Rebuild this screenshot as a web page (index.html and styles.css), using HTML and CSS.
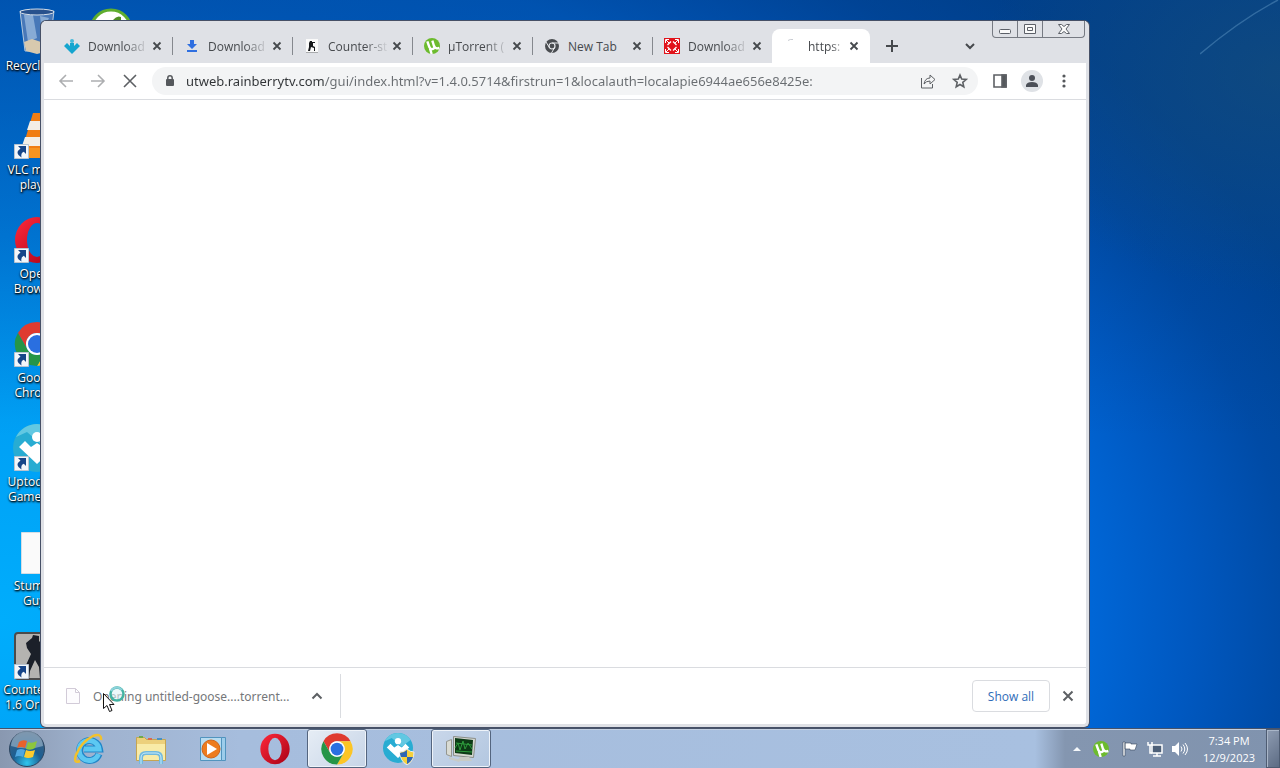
FILE: index.html
```html
<!DOCTYPE html>
<html lang="en">
<head>
    <meta charset="UTF-8">
    <title>Desktop</title>
    <link rel="stylesheet" href="styles.css">
</head>
<body>
    <!-- shared logos -->
    <svg class="defs" aria-hidden="true">
        <defs>
            <linearGradient id="opera-red" x1="0" y1="0" x2="1" y2="1">
                <stop offset="0" stop-color="#ff2a3c"/>
                <stop offset="1" stop-color="#a70014"/>
            </linearGradient>
            <radialGradient id="orb" cx="50%" cy="90%" r="90%">
                <stop offset="0" stop-color="#2fc6ee"/>
                <stop offset=".45" stop-color="#1b5f93"/>
                <stop offset="1" stop-color="#44617f"/>
            </radialGradient>
        </defs>
        <symbol id="chrome" viewBox="0 0 48 48">
            <path fill="#df3b30" d="M24 13H43.1A22 22 0 0 0 4.9 13L14.5 29.5A11 11 0 0 1 24 13z"/>
            <path fill="#fcc525" transform="rotate(120 24 24)" d="M24 13H43.1A22 22 0 0 0 4.9 13L14.5 29.5A11 11 0 0 1 24 13z"/>
            <path fill="#259547" transform="rotate(240 24 24)" d="M24 13H43.1A22 22 0 0 0 4.9 13L14.5 29.5A11 11 0 0 1 24 13z"/>
            <circle cx="24" cy="24" r="11" fill="#fff"/>
            <circle cx="24" cy="24" r="9" fill="#2a6fe0"/>
        </symbol>
        <symbol id="opera" viewBox="0 0 48 48">
            <path fill="url(#opera-red)" fill-rule="evenodd" d="M24 1a22 23 0 1 0 0 46a22 23 0 1 0 0-46zM24 7a10 17 0 1 1 0 34a10 17 0 1 1 0-34z"/>
        </symbol>
        <symbol id="utorrent" viewBox="0 0 24 24">
            <circle cx="12" cy="12" r="12" fill="#6cbb2e"/>
            <path fill="none" stroke="#fff" stroke-width="3.6" d="M5 5l3 8.500q1.500 4 5 3q3.500-1 2-4.500L12.500 4M15.500 12q1.500 5 7.500 3M9 16l2.500 8"/>
        </symbol>
        <symbol id="uptodown" viewBox="0 0 48 48">
            <circle cx="24" cy="24" r="24" fill="#28acd2"/>
            <path fill="#62c8e2" d="M24 0a24 24 0 0 1 20 11L30 22L14 8L3 13A24 24 0 0 1 24 0z"/>
            <circle cx="24" cy="13" r="5" fill="#fff"/>
            <path fill="#fff" d="M12 17l6 6 6-4 6 4 6-6 6 6-18 17L6 23z"/>
        </symbol>
        <symbol id="shortcut" viewBox="0 0 15 15">
            <path fill="#f2f6fa" stroke="#b9c4d0" d="M.5.5h14v14H.5z"/>
            <path fill="#164588" d="M4 2h8v8L9.800 7.800Q6.500 9 7.500 13.500Q0 9 6.500 4.500z"/>
        </symbol>
        <symbol id="x" viewBox="0 0 16 16">
            <path fill="none" stroke="currentColor" stroke-width="1.800" d="M4.500 4.500l7 7M11.500 4.500l-7 7"/>
        </symbol>
    </svg>

    <main class="desktop">
        <svg class="light-ray" viewBox="0 0 80 56" aria-hidden="true">
            <path d="M0 54Q40 20 78 0" fill="none" stroke="#6fa6cf" stroke-opacity=".4" stroke-width="1.500"/>
        </svg>

        <div class="shortcuts">
            <a class="shortcut" href="#">
                <svg class="shortcut-icon" viewBox="0 0 48 48">
                    <path fill="#4878b8" stroke="#b4c9de" d="M7 3h34l-5 40H12z"/>
                    <path fill="#88abd5" d="M11 7h9l4 23-9 4zM27 8l9 2-7 15z"/>
                    <ellipse cx="24" cy="4" rx="17" ry="3" fill="#28518d" stroke="#d6dfe8"/>
                    <path fill="#d8c9ae" d="M11 34l8-3 9 3 9-2-2 11-11 3-11-3z"/>
                </svg>
                <span>Recycle Bin</span>
            </a>
            <a class="shortcut" href="#">
                <svg class="shortcut-icon" viewBox="0 0 48 48">
                    <path fill="#f07d13" d="M20 1h8l11 37H9z"/>
                    <path fill="#f3eee6" d="M17 9h14l3 9H14zM12 25h24l3 9H9z"/>
                    <path fill="#f79420" d="M6 36h36l5 10H1z"/>
                </svg>
                <svg class="shortcut-arrow"><use href="#shortcut"/></svg>
                <span>VLC media player</span>
            </a>
            <a class="shortcut" href="#">
                <svg class="shortcut-icon"><use href="#opera"/></svg>
                <svg class="shortcut-arrow"><use href="#shortcut"/></svg>
                <span>Opera Browser</span>
            </a>
            <a class="shortcut" href="#">
                <svg class="shortcut-icon"><use href="#chrome"/></svg>
                <svg class="shortcut-arrow"><use href="#shortcut"/></svg>
                <span>Google Chrome</span>
            </a>
            <a class="shortcut" href="#">
                <svg class="shortcut-icon"><use href="#uptodown"/></svg>
                <svg class="shortcut-arrow"><use href="#shortcut"/></svg>
                <span>Uptodown Games S...</span>
            </a>
            <a class="shortcut" href="#">
                <svg class="shortcut-icon" viewBox="0 0 48 48">
                    <path fill="#fafafa" stroke="#d5dde4" d="M8.500 4.500h32v41h-32z"/>
                </svg>
                <span>Stumble Guys</span>
            </a>
            <a class="shortcut" href="#">
                <svg class="shortcut-icon" viewBox="0 0 48 48">
                    <rect x="2" y="1" width="44" height="46" rx="3" fill="#b4b3b0" stroke="#4b4b4b" stroke-width="2"/>
                    <path fill="#1b2029" d="M20 3l6 1v5l6 6-2 8-2 2 4 9-1 13h-4l-1-12-4-7-5 11-1 8h-5l2-14 5-11-4-6-1-5 6-5z"/>
                </svg>
                <svg class="shortcut-arrow"><use href="#shortcut"/></svg>
                <span>Counter Stri<br>1.6 Original</span>
            </a>
        </div>
        <div class="shortcuts">
            <a class="shortcut" href="#" aria-label="uTorrent Web">
                <svg class="shortcut-icon" viewBox="0 0 48 48">
                    <circle cx="24" cy="22" r="20" fill="#fff" stroke="#5fae2e" stroke-width="3"/>
                    <path fill="#4f8f25" d="M26 12q4-5 8-3v8h-8z"/>
                </svg>
            </a>
        </div>

        <section class="window">
            <header class="tab-strip">
                <div class="tab">
                    <svg class="favicon" viewBox="0 0 16 16">
                        <path fill="#15a5cf" d="M0 8l3-3 3 3 2-1 2 1 3-3 3 3-8 8z"/>
                        <circle cx="8" cy="3" r="2" fill="#45b9da"/>
                        <path fill="#15a5cf" d="M6 5h4v4H6z"/>
                    </svg>
                    <span class="tab-title">Download</span>
                    <button class="tab-close" aria-label="Close tab"><svg><use href="#x"/></svg></button>
                </div>
                <div class="tab">
                    <svg class="favicon" viewBox="0 0 16 16">
                        <path fill="#2f6fe0" d="M6 2h4v4h3l-5 5-5-5h3zM3 12h10v2H3z"/>
                    </svg>
                    <span class="tab-title">Download</span>
                    <button class="tab-close" aria-label="Close tab"><svg><use href="#x"/></svg></button>
                </div>
                <div class="tab">
                    <svg class="favicon" viewBox="0 0 16 16">
                        <path fill="#fafafa" d="M2 1h12v13H2z"/>
                        <path fill="#a9abad" d="M2 14h12v1H2z"/>
                        <path fill="#16181b" d="M6 3h2v1h3v1H9v3l2 1v4h-1v-3L7 9l-1 4H4l1-4V5z"/>
                    </svg>
                    <span class="tab-title">Counter-st</span>
                    <button class="tab-close" aria-label="Close tab"><svg><use href="#x"/></svg></button>
                </div>
                <div class="tab">
                    <svg class="favicon"><use href="#utorrent"/></svg>
                    <span class="tab-title">µTorrent (</span>
                    <button class="tab-close" aria-label="Close tab"><svg><use href="#x"/></svg></button>
                </div>
                <div class="tab">
                    <svg class="favicon" viewBox="0 0 16 16">
                        <circle cx="8" cy="8" r="7" fill="#494c50"/>
                        <circle cx="8" cy="8" r="3" fill="none" stroke="#e8eaed" stroke-width="1.2"/>
                        <path fill="none" stroke="#e8eaed" d="M8 5h7M5.400 9.500L2 4M10.600 9.500L7.500 15"/>
                    </svg>
                    <span class="tab-title tab-title-short">New Tab</span>
                    <button class="tab-close" aria-label="Close tab"><svg><use href="#x"/></svg></button>
                </div>
                <div class="tab">
                    <svg class="favicon" viewBox="0 0 16 16">
                        <path fill="#e1131b" d="M0 0h16v16H0z"/>
                        <path fill="none" stroke="#fff" d="M1.500 5V1.500H5M11 1.500h3.500V5M14.500 11v3.500H11M5 14.500H1.500V11M2 2l3 3M14 2l-3 3M14 14l-3-3M2 14l3-3"/>
                        <path fill="none" stroke="#fff" stroke-width="1.300" d="M7 3.500L3.500 7M9 3.500L12.500 7M12.500 9L9 12.500M3.500 9L7 12.500"/>
                    </svg>
                    <span class="tab-title">Download</span>
                    <button class="tab-close" aria-label="Close tab"><svg><use href="#x"/></svg></button>
                </div>
                <div class="tab tab-active">
                    <svg class="favicon" viewBox="0 0 16 16">
                        <path fill="none" stroke="#c9ccd2" d="M4 2.500q2-1.500 5-1"/>
                    </svg>
                    <span class="tab-title">https:</span>
                    <button class="tab-close" aria-label="Close tab"><svg><use href="#x"/></svg></button>
                </div>
                <button class="strip-button" aria-label="New tab">
                    <svg viewBox="0 0 16 16"><path fill="none" stroke="currentColor" stroke-width="2" d="M8 2v12M2 8h12"/></svg>
                </button>
                <button class="strip-button tab-search" aria-label="Search tabs">
                    <svg viewBox="0 0 16 16"><path fill="none" stroke="currentColor" stroke-width="2" d="M4 6l4 4 4-4"/></svg>
                </button>
                <div class="caption-buttons">
                    <button aria-label="Minimize">
                        <svg viewBox="0 0 14 12"><rect x="1.500" y="6.500" width="11" height="4" rx="1"/></svg>
                    </button>
                    <button aria-label="Restore">
                        <svg viewBox="0 0 14 12"><path d="M1.500 1.500h11v9h-11zM4.500 4.500h5v3h-5z"/></svg>
                    </button>
                    <button class="caption-close" aria-label="Close">
                        <svg viewBox="0 0 14 12"><path d="M1.500 1.500h3l2.500 2 2.500-2h3L9 6l3.500 4.500h-3L7 8.500l-2.500 2h-3L5 6z"/></svg>
                    </button>
                </div>
            </header>

            <nav class="toolbar">
                <button class="tool faded" aria-label="Back">
                    <svg viewBox="0 0 20 20"><path d="M17 10H4M10 4l-6 6 6 6"/></svg>
                </button>
                <button class="tool faded" aria-label="Forward">
                    <svg viewBox="0 0 20 20"><path d="M3 10h13M10 4l6 6-6 6"/></svg>
                </button>
                <button class="tool" aria-label="Stop">
                    <svg viewBox="0 0 20 20"><path d="M4 4l12 12M16 4L4 16"/></svg>
                </button>
                <div class="omnibox">
                    <svg class="lock" viewBox="0 0 12 14">
                        <path fill="#55585c" d="M3 5h6q1 0 1 1v5q0 1-1 1H3q-1 0-1-1V6q0-1 1-1z"/>
                        <path fill="none" stroke="#55585c" stroke-width="1.500" d="M3.800 6V4a2.200 2.200 0 0 1 4.400 0V6"/>
                    </svg>
                    <input class="url" type="text" aria-label="Address" value="utweb.rainberrytv.com/gui/index.html?v=1.4.0.5714&amp;firstrun=1&amp;localauth=localapie6944ae656e8425e:">
                    <button class="tool" aria-label="Share">
                        <svg class="thin" viewBox="0 0 20 20"><path d="M3.500 7v10h11v-4M6 13q1-6 6-6V4l5 4.500-5 4.500v-3q-4 0-6 3z"/></svg>
                    </button>
                    <button class="tool" aria-label="Bookmark">
                        <svg viewBox="0 0 20 20"><path d="M10 4l1.700 4.100 4.500.4-3.400 2.900 1 4.400-3.800-2.300-3.800 2.300 1-4.400-3.400-2.900 4.500-.4z"/></svg>
                    </button>
                </div>
                <button class="tool" aria-label="Side panel">
                    <svg viewBox="0 0 20 20"><path d="M4 4h12v12H4z"/><path fill="#55585c" d="M12 4h4v12h-4z"/></svg>
                </button>
                <button class="tool" aria-label="Profile">
                    <svg class="avatar" viewBox="0 0 22 22">
                        <circle cx="11" cy="11" r="11" fill="#dfe2e6" stroke="none"/>
                        <circle cx="11" cy="8" r="3" fill="#4c5058" stroke="none"/>
                        <path fill="#4c5058" stroke="none" d="M5 17v-2q1-3 6-3t6 3v2z"/>
                    </svg>
                </button>
                <button class="tool" aria-label="Menu">
                    <svg viewBox="0 0 20 20"><g fill="#55585c" stroke="none"><circle cx="10" cy="5" r="1.600"/><circle cx="10" cy="10" r="1.600"/><circle cx="10" cy="15" r="1.600"/></g></svg>
                </button>
            </nav>

            <div class="page"></div>

            <footer class="download-shelf">
                <div class="download">
                    <svg class="file-icon" viewBox="0 0 14 16">
                        <path fill="#fdfcfe" stroke="#d2cbd8" d="M.5.5h9l4 4v11H.5zM9.500.5v4h4"/>
                    </svg>
                    <span class="download-name">Opening untitled-goose....torrent...</span>
                    <button class="shelf-button" aria-label="Download options">
                        <svg viewBox="0 0 16 16"><path fill="none" stroke="currentColor" stroke-width="2" d="M3.500 10.500L8 6l4.500 4.500"/></svg>
                    </button>
                </div>
                <button class="show-all">Show all</button>
                <button class="shelf-button shelf-close" aria-label="Close downloads">
                    <svg viewBox="0 0 16 16"><path fill="none" stroke="currentColor" stroke-width="2" d="M3.500 3.500l9 9M12.500 3.500l-9 9"/></svg>
                </button>
            </footer>
        </section>

        <svg class="cursor" viewBox="0 0 26 28" aria-hidden="true">
            <circle cx="15" cy="9" r="6.500" fill="#dff3f6" fill-opacity=".6" stroke="#43b3a3" stroke-width="2.500"/>
            <path fill="none" stroke="#8dd2dc" stroke-width="2" d="M9 6a6.500 6.500 0 0 1 11-1"/>
            <path fill="#fff" stroke="#111" d="M1.500 8.500v15l3.500-3 2.500 6 2.500-1-2.500-6h4.500z"/>
        </svg>
    </main>

    <footer class="taskbar">
        <button class="start" aria-label="Start">
            <svg viewBox="0 0 38 38">
                <circle cx="19" cy="19" r="17.500" fill="url(#orb)" stroke="#2c4560"/>
                <path fill="#b9cddd" fill-opacity=".5" d="M3 16a16 15 0 0 1 32 0q-16 5-32 0z"/>
                <path fill="#e8622c" d="M11 12q4-3 8-1l-2 7q-4-2-8 0z"/>
                <path fill="#8cc63e" d="M20 12q4 2 9-1l-2 7q-4 3-9 1z"/>
                <path fill="#4fa6e0" d="M9 20q4-2 8 0l-2 7q-4-2-8 0z"/>
                <path fill="#fccb2e" d="M18 20q4 2 9 0l-2 7q-5 2-9 0z"/>
            </svg>
        </button>
        <button class="task" aria-label="Internet Explorer">
            <svg viewBox="0 0 32 32">
                <path fill="none" stroke="#2186c8" stroke-width="7" d="M26 21a10 10 0 1 1 .5-5H11"/>
                <path fill="none" stroke="#5cc8f2" stroke-width="5" d="M25.500 21a10 10 0 1 1 .5-5H11"/>
                <path fill="none" stroke="#f2c12c" stroke-width="2.500" d="M7 28q-7 3-4-6Q8 9 20 3q9-3 8 4"/>
            </svg>
        </button>
        <button class="task" aria-label="Windows Explorer">
            <svg viewBox="0 0 32 32">
                <path fill="#ecd07c" stroke="#c5a551" d="M1.500 4.500h8l2 2h19v21h-29z"/>
                <path fill="#f8eba8" d="M2 11h28v16H2z"/>
                <path fill="#6faa4b" d="M4 3h4v2H4z"/>
                <path fill="#db6a4c" d="M13 5h4v2h-4z"/>
                <path fill="#4a92c2" d="M22 5h5v2h-5z"/>
                <path fill="none" stroke="#72b9de" stroke-width="4" d="M6 31v-6q0-5 5-5h10q5 0 5 5v6"/>
                <path fill="none" stroke="#c6eafa" d="M6 31v-6q0-5 5-5h10q5 0 5 5v6"/>
            </svg>
        </button>
        <button class="task" aria-label="Media Player">
            <svg viewBox="0 0 32 32">
                <path fill="#9dcdeb" stroke="#5294be" d="M8.500 4.500h20v23h-20z"/>
                <path fill="#b7dcf1" stroke="#5294be" d="M3.500 4.500h21v23h-21z"/>
                <circle cx="14" cy="16" r="9" fill="#ed7c1f" stroke="#cf651a"/>
                <path fill="#fff" d="M10 10l10 6-10 6z"/>
            </svg>
        </button>
        <button class="task" aria-label="Opera">
            <svg><use href="#opera"/></svg>
        </button>
        <button class="task task-open" aria-label="Google Chrome">
            <svg class="task-chrome"><use href="#chrome"/></svg>
        </button>
        <button class="task" aria-label="Uptodown">
            <svg viewBox="0 0 32 32">
                <use href="#uptodown" width="30" height="30"/>
                <path fill="#f6d13b" stroke="#e7ebef" d="M17 19q4 0 7-3 3 3 7 3 0 9-7 13-7-4-7-13z"/>
                <path fill="#2e66b4" d="M24 17v7h-6q-1-2-1-4 4 0 7-3zM24 24h6q-2 5-6 7z"/>
            </svg>
        </button>
        <button class="task task-open" aria-label="System Monitor">
            <svg viewBox="0 0 32 32">
                <path fill="#d9dbd3" stroke="#94968f" d="M1.500 8.500l5-2v17l-5-2z"/>
                <path fill="#d4d7d0" stroke="#8b8e88" d="M8.500 3.500l22 2-2 19-20-2z"/>
                <path fill="#0d3b16" d="M10 5l18 2-1 15-17-2z"/>
                <path fill="none" stroke="#2d9a3c" d="M10 15l3-5 2 7 3-9 2 8 3-6 4 6M11 10l16 2M11 18l16 1"/>
                <path fill="#c8cbc5" d="M15 24h9l3 4H12zM4 24l12 3-2 2-10-3z"/>
            </svg>
        </button>

        <div class="tray">
            <svg class="tray-arrow" viewBox="0 0 10 6"><path fill="#f4f7fa" d="M1 5l4-4 4 4z"/></svg>
            <svg class="tray-icon tray-app"><use href="#utorrent"/></svg>
            <svg class="tray-icon" viewBox="0 0 16 16">
                <path fill="#fff" stroke="#36465c" stroke-width=".6" d="M1 1h2v14H1zM3 2h6v1h6l-2 6H8V8H3z"/>
            </svg>
            <svg class="tray-icon" viewBox="0 0 16 16">
                <path fill="#4d6078" stroke="#fff" stroke-width="1.500" d="M5 4h10v8H5z"/>
                <path fill="none" stroke="#fff" stroke-width="1.500" d="M6 15h8M10 12v3M1 1v3h4V1M3 4v8h2"/>
            </svg>
            <svg class="tray-icon" viewBox="0 0 16 16">
                <path fill="#fff" d="M0 5h3l4-4v14l-4-4H0z"/>
                <path fill="none" stroke="#fff" d="M9 5.500q2 2.500 0 5M11 3.500q3.500 4.500 0 9M13 2q5 6 0 12"/>
            </svg>
        </div>
        <div class="clock">
            <span>7:34 PM</span>
            <span>12/9/2023</span>
        </div>
        <button class="show-desktop" aria-label="Show desktop"></button>
    </footer>
</body>
</html>
```
FILE: styles.css
```css
:root {
    --strip: #dfe1e6;
    --icon: #5d6064;
    --dark: #46494d;
    --line: #dadce0;
}

* {
    box-sizing: border-box;
}

body {
    margin: 0;
    height: 100vh;
    display: flex;
    flex-direction: column;
    overflow: hidden;
    font-family: "Open Sans", "Noto Sans", sans-serif;
    font-size: 12px;
}

button {
    border: 0;
    padding: 0;
    background: none;
    font: inherit;
    color: inherit;
}

svg {
    display: block;
    flex: none;
}

.defs {
    position: absolute;
    width: 0;
    height: 0;
}

/* Desktop */
.desktop {
    position: relative;
    flex: 1;
    display: flex;
    overflow: hidden;
    background:
        radial-gradient(ellipse 300px 220px at 100% 10%, rgba(24, 78, 120, .6), rgba(24, 78, 120, 0)),
        linear-gradient(180deg, rgba(0, 58, 128, .45) 0, rgba(0, 58, 128, 0) 60%),
        radial-gradient(ellipse 1400px 900px at 0 85%, #00adfc 0, #00a0f5 22%, #0080e4 44%, #0068d8 70%, #0066d6 78%, #0058c0 85%, #004ba6 92%, #004494 100%);
}

.light-ray {
    position: absolute;
    top: 0;
    right: 0;
    width: 80px;
    height: 56px;
}

.shortcuts {
    width: 74px;
    flex: none;
}

.shortcut {
    position: relative;
    display: flex;
    flex-direction: column;
    align-items: center;
    height: 104px;
    padding-top: 8px;
    color: #fff;
    text-align: center;
    text-decoration: none;
    line-height: 15px;
    text-shadow: 0 1px 2px #000, 1px 1px 2px #000;
}

.shortcut-icon {
    width: 48px;
    height: 48px;
    margin-bottom: 2px;
}

.shortcut-arrow {
    position: absolute;
    left: 14px;
    top: 40px;
    width: 15px;
    height: 15px;
}

/* Browser window */
.window {
    position: absolute;
    inset: 21px 191px 1px 41px;
    display: flex;
    flex-direction: column;
    border: solid var(--strip);
    border-width: 0 3px 3px;
    border-radius: 5px;
    background: #fff;
    box-shadow: 0 0 0 1px #465066;
}

.tab-strip {
    display: flex;
    height: 42px;
    padding-left: 9px;
    background: var(--strip);
    color: var(--dark);
}

.tab {
    display: flex;
    align-items: center;
    width: 120px;
    height: 34px;
    margin-top: 8px;
    padding: 0 8px 0 11px;
    background: linear-gradient(#85888e, #85888e) right center / 1px 18px no-repeat;
}

.tab:nth-child(6) {
    background: none;
}

.favicon {
    width: 16px;
    height: 16px;
    margin-right: 8px;
}

.tab-title {
    flex: 1;
    overflow: hidden;
    white-space: nowrap;
    mask-image: linear-gradient(90deg, #000 60%, transparent);
}

.tab-title-short {
    mask-image: none;
}

.tab-close,
.tab-close svg {
    width: 16px;
    height: 16px;
}

.tab-active {
    width: 98px;
    margin-left: -1px;
    padding-left: 12px;
    border-radius: 8px 8px 0 0;
    background: #fff;
}

.strip-button {
    width: 28px;
    height: 28px;
    margin: 11px 0 0 8px;
    display: grid;
    place-items: center;
}

.strip-button svg {
    width: 16px;
    height: 16px;
}

.tab-search {
    margin-left: auto;
}

.caption-buttons {
    display: flex;
    height: 17px;
    margin: 0 1px 0 8px;
    border: 1px solid #767a82;
    border-top: 0;
    border-radius: 0 0 4px 4px;
}

.caption-buttons button {
    display: grid;
    place-items: center;
    width: 25px;
    border-right: 1px solid #767a82;
}

.caption-buttons .caption-close {
    width: 41px;
    border: 0;
}

.caption-buttons svg {
    width: 14px;
    height: 12px;
    fill: #fafafa;
    stroke: #5c6068;
}

.toolbar {
    display: flex;
    align-items: center;
    height: 37px;
    padding: 0 6px;
    border-bottom: 1px solid var(--line);
}

.tool {
    flex: none;
    display: grid;
    place-items: center;
    width: 32px;
    height: 28px;
}

.tool svg {
    width: 20px;
    height: 20px;
    fill: none;
    stroke: var(--icon);
    stroke-width: 1.6;
}

.tool .thin {
    stroke-width: 1;
}

.tool .avatar {
    width: 22px;
    height: 22px;
}

.faded {
    opacity: .5;
}

.omnibox {
    flex: 1;
    display: flex;
    align-items: center;
    height: 28px;
    margin: 0 6px;
    padding: 0 2px 0 12px;
    border-radius: 14px;
    background: #f3f4f5;
}

.lock {
    width: 12px;
    height: 14px;
    margin-right: 10px;
}

/* the host part of the address is darker than the path */
.url {
    flex: 1;
    min-width: 0;
    height: 28px;
    border: 0;
    padding: 0;
    font: 13px "Noto Sans", "Open Sans", sans-serif;
    background: linear-gradient(90deg, #303336 139px, #696d71 139px);
    background-clip: text;
    color: transparent;
}

.page {
    flex: 1;
}

.download-shelf {
    display: flex;
    align-items: center;
    height: 57px;
    border-top: 1px solid var(--line);
    color: #75777a;
}

.download {
    display: flex;
    align-items: center;
    width: 297px;
    height: 44px;
    padding: 0 11px 0 22px;
    border-right: 1px solid var(--line);
}

.file-icon {
    width: 14px;
    height: 16px;
    margin-right: 13px;
}

.download-name {
    flex: 1;
    white-space: nowrap;
    font-family: "Noto Sans", "Open Sans", sans-serif;
}

.shelf-button {
    display: grid;
    place-items: center;
    width: 24px;
    height: 24px;
    color: var(--icon);
}

.shelf-button svg {
    width: 16px;
    height: 16px;
}

.show-all {
    width: 78px;
    height: 32px;
    margin-left: auto;
    border: 1px solid var(--line);
    border-radius: 4px;
    color: #2f6cb8;
}

.shelf-close {
    margin: 0 6px;
}

.cursor {
    position: absolute;
    left: 102px;
    top: 685px;
    width: 26px;
    height: 28px;
}

/* Taskbar */
.taskbar {
    display: flex;
    height: 40px;
    border-top: 1px solid #47536a;
    box-shadow: inset 0 1px #c3d0e2;
    background: linear-gradient(90deg, #8998b0 0, #9fb2ce 90px, #a6bddd 240px, #a8c0e0 1035px, #8496b0 1065px, #8093ae 100%);
}

.start {
    width: 54px;
    margin-right: 4px;
    display: grid;
    place-items: center;
}

.start svg {
    width: 38px;
    height: 38px;
}

.task {
    display: grid;
    place-items: center;
    width: 60px;
    margin: 0 1px;
}

.task svg {
    width: 32px;
    height: 32px;
}

.task .task-chrome {
    width: 34px;
    height: 34px;
}

.task-open {
    border: 1px solid #54657f;
    border-radius: 3px;
    background: linear-gradient(135deg, #e6edf5, #c6d4e7);
    box-shadow: inset 0 0 0 1px #eef3f9;
}

.task-open + .task + .task-open {
    background: linear-gradient(135deg, #c9d7ea, #b3c7e0);
}

.tray {
    display: flex;
    align-items: center;
    gap: 9px;
    margin: 0 4px 0 auto;
}

.tray-arrow {
    width: 10px;
    height: 6px;
    margin-right: 2px;
}

.tray-icon {
    width: 16px;
    height: 16px;
}

.tray-app {
    margin-right: 4px;
}

.clock {
    display: flex;
    flex-direction: column;
    justify-content: center;
    width: 74px;
    color: #fff;
    font-size: 11px;
    text-align: center;
    line-height: 17px;
}

.show-desktop {
    width: 14px;
    border: 1px solid #4e5c72;
    background: linear-gradient(135deg, #8e9cb2, #5d6c84);
    box-shadow: inset 1px 1px #a9b6c8;
}
```
